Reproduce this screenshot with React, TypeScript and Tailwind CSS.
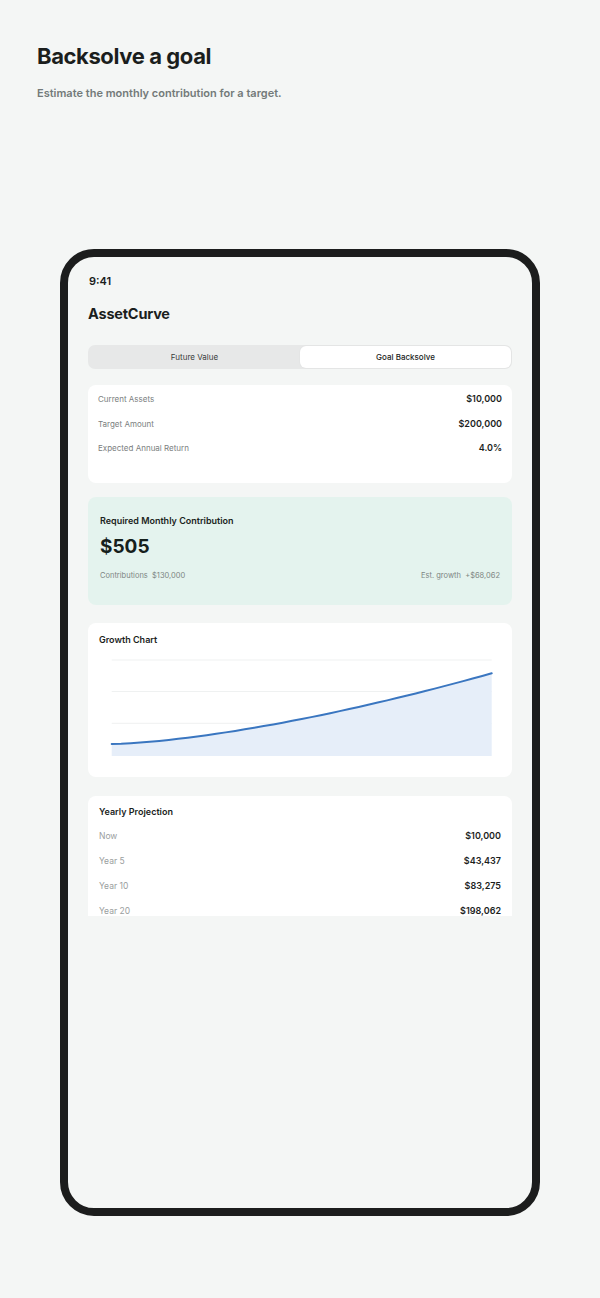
import React from "react";

function chartPath() {
  const pts: [number, number][] = [];
  const x0 = 12.7;
  const x1 = 392.7;
  for (let i = 0; i <= 40; i++) {
    const u = i / 40;
    const x = x0 + (x1 - x0) * u;
    const y = 88 - 70.7 * Math.pow(u, 1.5);
    pts.push([x, y]);
  }
  const line = pts.map((p, i) => `${i === 0 ? "M" : "L"}${p[0].toFixed(2)},${p[1].toFixed(2)}`).join(" ");
  const area = `${line} L${x1},100 L${x0},100 Z`;
  return { line, area };
}

export default function App() {
  const { line, area } = chartPath();
  return (
    <div
      className="min-h-[1298px] w-full bg-[#f4f6f5] text-[#1b1e1d]"
      style={{ fontFamily: "Inter, 'Noto Sans', 'Liberation Sans', sans-serif" }}
    >
      <div className="px-[37px] pt-[42px]">
        <h1 className="text-[22px] leading-[28px] font-bold tracking-[-0.4px] text-[#1b1e1d]">Backsolve a goal</h1>
        <p className="mt-[15px] text-[11px] leading-[16px] font-semibold text-[#737a79]">
          Estimate the monthly contribution for a target.
        </p>
      </div>

      <div className="mx-[60px] mt-[148px] h-[967px] rounded-[34px] border-[8px] border-[#1c1d1d] bg-[#f4f6f5] overflow-hidden">
        <div className="px-[20px] pt-[17px]">
          <div className="pl-[1px] text-[11px] leading-[14px] font-semibold text-[#1b1e1d]">9:41</div>
          <div className="mt-[16px] text-[14.5px] leading-[20px] font-bold tracking-[-0.2px] text-[#1b1e1d]">AssetCurve</div>

          <div className="mt-[21px] flex h-[24px] rounded-[7px] bg-[#e7e8e8] p-[1px]">
            <div className="flex flex-1 items-center justify-center text-[8px] text-[#3a3d3c]">Future Value</div>
            <div className="flex flex-1 items-center justify-center rounded-[6px] bg-white text-[8px] font-medium text-[#1b1e1d] shadow-[0_0_2px_rgba(0,0,0,0.06)]">
              Goal Backsolve
            </div>
          </div>

          <div className="mt-[16px] rounded-[8px] bg-white px-[10px] pt-[8px] pb-[29px]">
            <div className="flex flex-col gap-[12.5px]">
              {[
                ["Current Assets", "$10,000"],
                ["Target Amount", "$200,000"],
                ["Expected Annual Return", "4.0%"],
              ].map(([l, v]) => (
                <div key={l} className="flex items-center justify-between leading-[12px]">
                  <span className="text-[8px] text-[#7b8080]">{l}</span>
                  <span className="text-[9px] font-semibold text-[#1b1e1d]">{v}</span>
                </div>
              ))}
            </div>
          </div>

          <div className="mt-[14px] rounded-[8px] bg-[#e4f3ee] px-[12px] pt-[17px] pb-[23px]">
            <div className="text-[9px] leading-[14px] font-semibold text-[#1b2421]">Required Monthly Contribution</div>
            <div className="mt-[7px] text-[19px] leading-[24px] font-bold text-[#15201c]">$505</div>
            <div className="mt-[11px] flex items-center justify-between text-[7.5px] leading-[12px] text-[#7d8683]">
              <span>Contributions&nbsp;&nbsp;$130,000</span>
              <span>Est. growth&nbsp;&nbsp;+$68,062</span>
            </div>
          </div>

          <div className="mt-[18px] rounded-[8px] bg-white px-[11px] pt-[11px] pb-[17px]">
            <div className="text-[9px] leading-[12px] font-semibold text-[#1b1e1d]">Growth Chart</div>
            <svg className="mt-[10px] block" width="402" height="104" viewBox="0 0 402 104">
              <line x1="12.7" x2="392.7" y1="4" y2="4" stroke="#eff1f1" strokeWidth="1" />
              <line x1="12.7" x2="392.7" y1="35.5" y2="35.5" stroke="#eff1f1" strokeWidth="1" />
              <line x1="12.7" x2="392.7" y1="67.3" y2="67.3" stroke="#eff1f1" strokeWidth="1" />
              <path d={area} fill="#e6eef9" />
              <path d={line} fill="none" stroke="#3a76c0" strokeWidth="2" strokeLinejoin="round" strokeLinecap="round" />
            </svg>
          </div>

          <div className="mt-[19px] h-[120px] overflow-hidden rounded-t-[8px] bg-white px-[11px] pt-[10px]">
            <div className="text-[9px] leading-[12px] font-semibold text-[#1b1e1d]">Yearly Projection</div>
            <div className="mt-[12px] flex flex-col gap-[13px]">
              {[
                ["Now", "$10,000"],
                ["Year 5", "$43,437"],
                ["Year 10", "$83,275"],
                ["Year 20", "$198,062"],
              ].map(([l, v]) => (
                <div key={l} className="flex items-center justify-between leading-[12px]">
                  <span className="text-[8.5px] text-[#9a9e9e]">{l}</span>
                  <span className="text-[9px] font-semibold text-[#1b1e1d]">{v}</span>
                </div>
              ))}
            </div>
          </div>
        </div>
      </div>
    </div>
  );
}
